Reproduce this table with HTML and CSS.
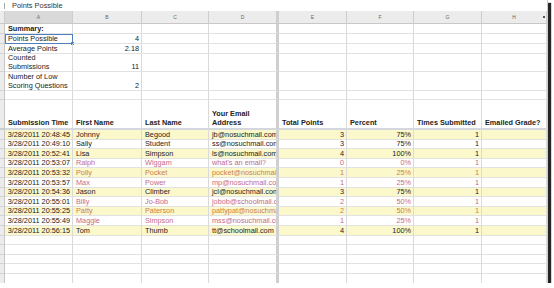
FILE: index.html
```html
<!DOCTYPE html>
<html>
<head>
<meta charset="utf-8">
<link rel="stylesheet" href="styles.css">
</head>
<body>
<div class="sheet">
  <div class="fbar"><span class="fbar-mark"></span><span class="fbar-text">Points Possible</span></div>

  <div class="row hdr">
    <div class="c rh"></div><div class="c sel">A</div><div class="c">B</div><div class="c">C</div><div class="c dv">D</div><div class="c">E</div><div class="c">F</div><div class="c">G</div><div class="c">H<span class="dot"></span></div>
  </div>

  <div class="row h10">
    <div class="c rh"></div><div class="c b">Summary:</div><div class="c"></div><div class="c"></div><div class="c dv"></div><div class="c"></div><div class="c"></div><div class="c"></div><div class="c"></div>
  </div>
  <div class="row h10">
    <div class="c rh"></div><div class="c selcell">Points Possible<span class="handle"></span></div><div class="c n">4</div><div class="c"></div><div class="c dv"></div><div class="c"></div><div class="c"></div><div class="c"></div><div class="c"></div>
  </div>
  <div class="row h10">
    <div class="c rh"></div><div class="c">Average Points</div><div class="c n">2.18</div><div class="c"></div><div class="c dv"></div><div class="c"></div><div class="c"></div><div class="c"></div><div class="c"></div>
  </div>
  <div class="row h18">
    <div class="c rh"></div><div class="c w">Counted Submissions</div><div class="c n">11</div><div class="c"></div><div class="c dv"></div><div class="c"></div><div class="c"></div><div class="c"></div><div class="c"></div>
  </div>
  <div class="row h19">
    <div class="c rh"></div><div class="c w">Number of Low Scoring Questions</div><div class="c n">2</div><div class="c"></div><div class="c dv"></div><div class="c"></div><div class="c"></div><div class="c"></div><div class="c"></div>
  </div>
  <div class="row h9">
    <div class="c rh"></div><div class="c"></div><div class="c"></div><div class="c"></div><div class="c dv"></div><div class="c"></div><div class="c"></div><div class="c"></div><div class="c"></div>
  </div>
  <div class="row h28 freeze">
    <div class="c rh"></div><div class="c b">Submission Time</div><div class="c b">First Name</div><div class="c b">Last Name</div><div class="c b w dv">Your Email Address</div><div class="c b">Total Points</div><div class="c b">Percent</div><div class="c b">Times Submitted</div><div class="c b">Emailed Grade?</div>
  </div>

  <div class="row d y">
    <div class="c rh"></div><div class="c n">3/28/2011 20:48:45</div><div class="c">Johnny</div><div class="c">Begood</div><div class="c dv">jb@nosuchmail.com</div><div class="c n">3</div><div class="c n">75%</div><div class="c n">1</div><div class="c"></div>
  </div>
  <div class="row d">
    <div class="c rh"></div><div class="c n">3/28/2011 20:49:10</div><div class="c">Sally</div><div class="c">Student</div><div class="c dv">ss@nosuchmail.com</div><div class="c n">3</div><div class="c n">75%</div><div class="c n">1</div><div class="c"></div>
  </div>
  <div class="row d y">
    <div class="c rh"></div><div class="c n">3/28/2011 20:52:41</div><div class="c">Lisa</div><div class="c">Simpson</div><div class="c dv">ls@nosuchmail.com</div><div class="c n">4</div><div class="c n">100%</div><div class="c n">1</div><div class="c"></div>
  </div>
  <div class="row d low">
    <div class="c rh"></div><div class="c n k">3/28/2011 20:53:07</div><div class="c">Ralph</div><div class="c">Wiggam</div><div class="c dv">what's an email?</div><div class="c n">0</div><div class="c n">0%</div><div class="c n">1</div><div class="c"></div>
  </div>
  <div class="row d y low">
    <div class="c rh"></div><div class="c n k">3/28/2011 20:53:32</div><div class="c">Polly</div><div class="c">Pocket</div><div class="c dv">pocket@nosuchmail.com</div><div class="c n">1</div><div class="c n">25%</div><div class="c n">1</div><div class="c"></div>
  </div>
  <div class="row d low">
    <div class="c rh"></div><div class="c n k">3/28/2011 20:53:57</div><div class="c">Max</div><div class="c">Power</div><div class="c dv">mp@nosuchmail.com</div><div class="c n">1</div><div class="c n">25%</div><div class="c n">1</div><div class="c"></div>
  </div>
  <div class="row d y">
    <div class="c rh"></div><div class="c n">3/28/2011 20:54:36</div><div class="c">Jason</div><div class="c">Climber</div><div class="c dv">jcl@nosuchmail.com</div><div class="c n">3</div><div class="c n">75%</div><div class="c n">1</div><div class="c"></div>
  </div>
  <div class="row d low">
    <div class="c rh"></div><div class="c n k">3/28/2011 20:55:01</div><div class="c">Billy</div><div class="c">Jo-Bob</div><div class="c dv">jobob@schoolmail.com</div><div class="c n">2</div><div class="c n">50%</div><div class="c n">1</div><div class="c"></div>
  </div>
  <div class="row d y low">
    <div class="c rh"></div><div class="c n k">3/28/2011 20:55:25</div><div class="c">Patty</div><div class="c">Paterson</div><div class="c dv">pattypat@nosuchmail.com</div><div class="c n">2</div><div class="c n">50%</div><div class="c n">1</div><div class="c"></div>
  </div>
  <div class="row d low">
    <div class="c rh"></div><div class="c n k">3/28/2011 20:55:49</div><div class="c">Maggie</div><div class="c">Simpson</div><div class="c dv">mss@nosuchmail.com</div><div class="c n">1</div><div class="c n">25%</div><div class="c n">1</div><div class="c"></div>
  </div>
  <div class="row d y">
    <div class="c rh"></div><div class="c n">3/28/2011 20:56:15</div><div class="c">Tom</div><div class="c">Thumb</div><div class="c dv">tt@schoolmail.com</div><div class="c n">4</div><div class="c n">100%</div><div class="c n">1</div><div class="c"></div>
  </div>

  <div class="row d">
    <div class="c rh"></div><div class="c"></div><div class="c"></div><div class="c"></div><div class="c dv"></div><div class="c"></div><div class="c"></div><div class="c"></div><div class="c"></div>
  </div>
  <div class="row d">
    <div class="c rh"></div><div class="c"></div><div class="c"></div><div class="c"></div><div class="c dv"></div><div class="c"></div><div class="c"></div><div class="c"></div><div class="c"></div>
  </div>
  <div class="row d">
    <div class="c rh"></div><div class="c"></div><div class="c"></div><div class="c"></div><div class="c dv"></div><div class="c"></div><div class="c"></div><div class="c"></div><div class="c"></div>
  </div>
  <div class="row d">
    <div class="c rh"></div><div class="c"></div><div class="c"></div><div class="c"></div><div class="c dv"></div><div class="c"></div><div class="c"></div><div class="c"></div><div class="c"></div>
  </div>
  <div class="row d">
    <div class="c rh"></div><div class="c"></div><div class="c"></div><div class="c"></div><div class="c dv"></div><div class="c"></div><div class="c"></div><div class="c"></div><div class="c"></div>
  </div>
</div>
</body>
</html>
```

FILE: styles.css
```css
html, body {
  margin: 0;
  padding: 0;
  background: #ffffff;
}

body {
  font-family: "Liberation Sans", Arial, sans-serif;
  font-size: 7.3px;
  color: #222222;
}

.sheet {
  width: 548px;
  height: 283px;
  overflow: hidden;
  background: #ffffff;
  box-shadow: 3px 3px 1px rgba(25, 25, 25, 0.95);
  border-right: 1px solid #cfcfcf;
  box-sizing: border-box;
}

.fbar {
  height: 11px;
  display: flex;
  align-items: center;
  gap: 7px;
  padding-left: 4px;
  box-sizing: border-box;
}

.fbar-mark {
  width: 1px;
  height: 6px;
  background: #a8a8a8;
}

.fbar-text {
  font-size: 7.4px;
  color: #333333;
  line-height: 9px;
}

.row {
  display: grid;
  grid-template-columns: 5px 68px 69px 67px 70px 68px 67px 68px 65px;
}

.c {
  box-sizing: border-box;
  border-right: 1px solid #dadada;
  border-bottom: 1px solid #e2e2e2;
  padding: 0 2px 0 3px;
  display: flex;
  align-items: flex-end;
  overflow: hidden;
  white-space: nowrap;
  line-height: 9px;
  position: relative;
}

.c.dv {
  border-right: 3px solid #cfcfcf;
}

.c.rh {
  background: #ececec;
  border-right: 1px solid #c6c6c6;
  border-bottom: 1px solid #d2d2d2;
  padding: 0;
}

.c.n {
  justify-content: flex-end;
}

.c.b {
  font-weight: bold;
}

.c.w {
  white-space: normal;
}

.hdr {
  height: 13px;
}

.hdr .c {
  background: #ececec;
  border-right: 1px solid #cdcdcd;
  border-bottom: 1px solid #c8c8c8;
  justify-content: center;
  align-items: center;
  font-size: 5px;
  color: #666666;
  padding: 0;
}

.hdr .c.dv {
  border-right: 3px solid #cfcfcf;
}

.hdr .c.sel {
  background: #d9d9d9;
}

.dot {
  position: absolute;
  right: 1px;
  top: 5px;
  width: 2px;
  height: 2px;
  background: #555555;
}

.h9 { height: 9px; }
.h10 { height: 10px; }
.h18 { height: 18px; }
.h19 { height: 19px; }
.h28 { height: 30px; }

.freeze .c {
  border-bottom: 2px solid #d4d8de;
  padding-bottom: 1px;
}

.freeze .c.rh {
  border-bottom: 2px solid #c8ccd2;
}

.d {
  height: 9.6px;
}

.y .c {
  background: #fbf8cb;
}

.y .c.rh {
  background: #ececec;
}

.low .c {
  color: #c46a8c;
}

.low.y .c {
  color: #cc7f4a;
}

.low .c.k {
  color: #222222;
}

.selcell {
  outline: 1px solid #4f7fbf;
  outline-offset: -1px;
  overflow: visible;
}

.handle {
  position: absolute;
  right: -2px;
  bottom: -2px;
  width: 3px;
  height: 3px;
  background: #4f7fbf;
}
```
